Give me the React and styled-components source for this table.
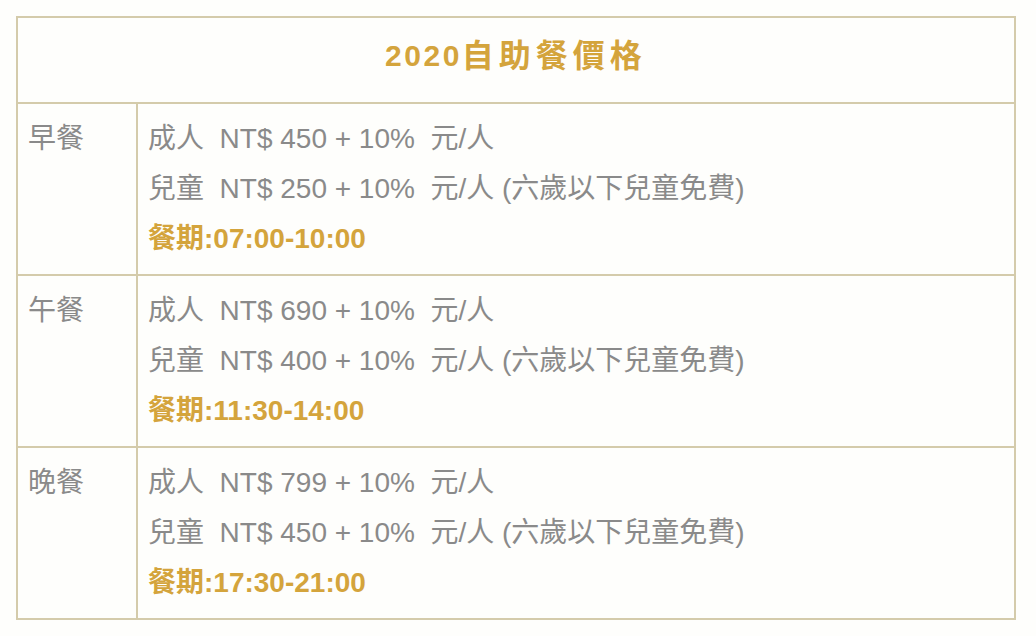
import React from 'react'
import styled, { createGlobalStyle } from 'styled-components'

const GlobalStyle = createGlobalStyle`
  body {
    margin: 0;
    background: #fefefc;
    font-family: "Liberation Sans", "Noto Sans CJK TC", sans-serif;
  }
`

const meals = [
  { name: '早餐', adult: '450', child: '250', time: '07:00-10:00' },
  { name: '午餐', adult: '690', child: '400', time: '11:30-14:00' },
  { name: '晚餐', adult: '799', child: '450', time: '17:30-21:00' },
]

const Page = styled.div`
  padding: 16px 20px 16px 16px;
`

const Table = styled.div`
  width: 1000px;
  border: 2px solid #d4cbab;
  box-sizing: border-box;
`

const Title = styled.h1`
  margin: 0;
  height: 86px;
  box-sizing: border-box;
  padding-bottom: 9px;
  display: flex;
  align-items: center;
  justify-content: center;
  border-bottom: 2px solid #d4cbab;
  color: #d4a43c;
  line-height: 30px;
  font-weight: bold;
`

const Year = styled.span`
  font-size: 30px;
  letter-spacing: 2.5px;
`

const TitleText = styled.span`
  font-size: 32px;
  letter-spacing: 5px;
`

const Row = styled.div`
  display: grid;
  grid-template-columns: 120px 1fr;
  border-bottom: ${(p) => (p.$last ? 'none' : '2px solid #d4cbab')};
`

const Label = styled.div`
  padding: 10px;
  border-right: 2px solid #d4cbab;
  color: #8a8a8a;
  font-size: 28px;
  line-height: 50px;
`

const Cell = styled.div`
  padding: 10px;
`

const Line = styled.div`
  color: ${(p) => (p.$gold ? '#d4a43c' : '#8a8a8a')};
  font-weight: ${(p) => (p.$gold ? 'bold' : 'normal')};
  font-size: 28px;
  line-height: 50px;
  white-space: pre;
`

export default function App() {
  return (
    <>
      <GlobalStyle />
      <Page>
        <Table>
          <Title>
            <Year>2020</Year>
            <TitleText>自助餐價格</TitleText>
          </Title>
          {meals.map((m, i) => (
            <Row key={m.name} $last={i === meals.length - 1}>
              <Label>{m.name}</Label>
              <Cell>
                <Line>{`成人  NT$ ${m.adult} + 10%  元/人`}</Line>
                <Line>{`兒童  NT$ ${m.child} + 10%  元/人 (六歲以下兒童免費)`}</Line>
                <Line $gold>{`餐期:${m.time}`}</Line>
              </Cell>
            </Row>
          ))}
        </Table>
      </Page>
    </>
  )
}
